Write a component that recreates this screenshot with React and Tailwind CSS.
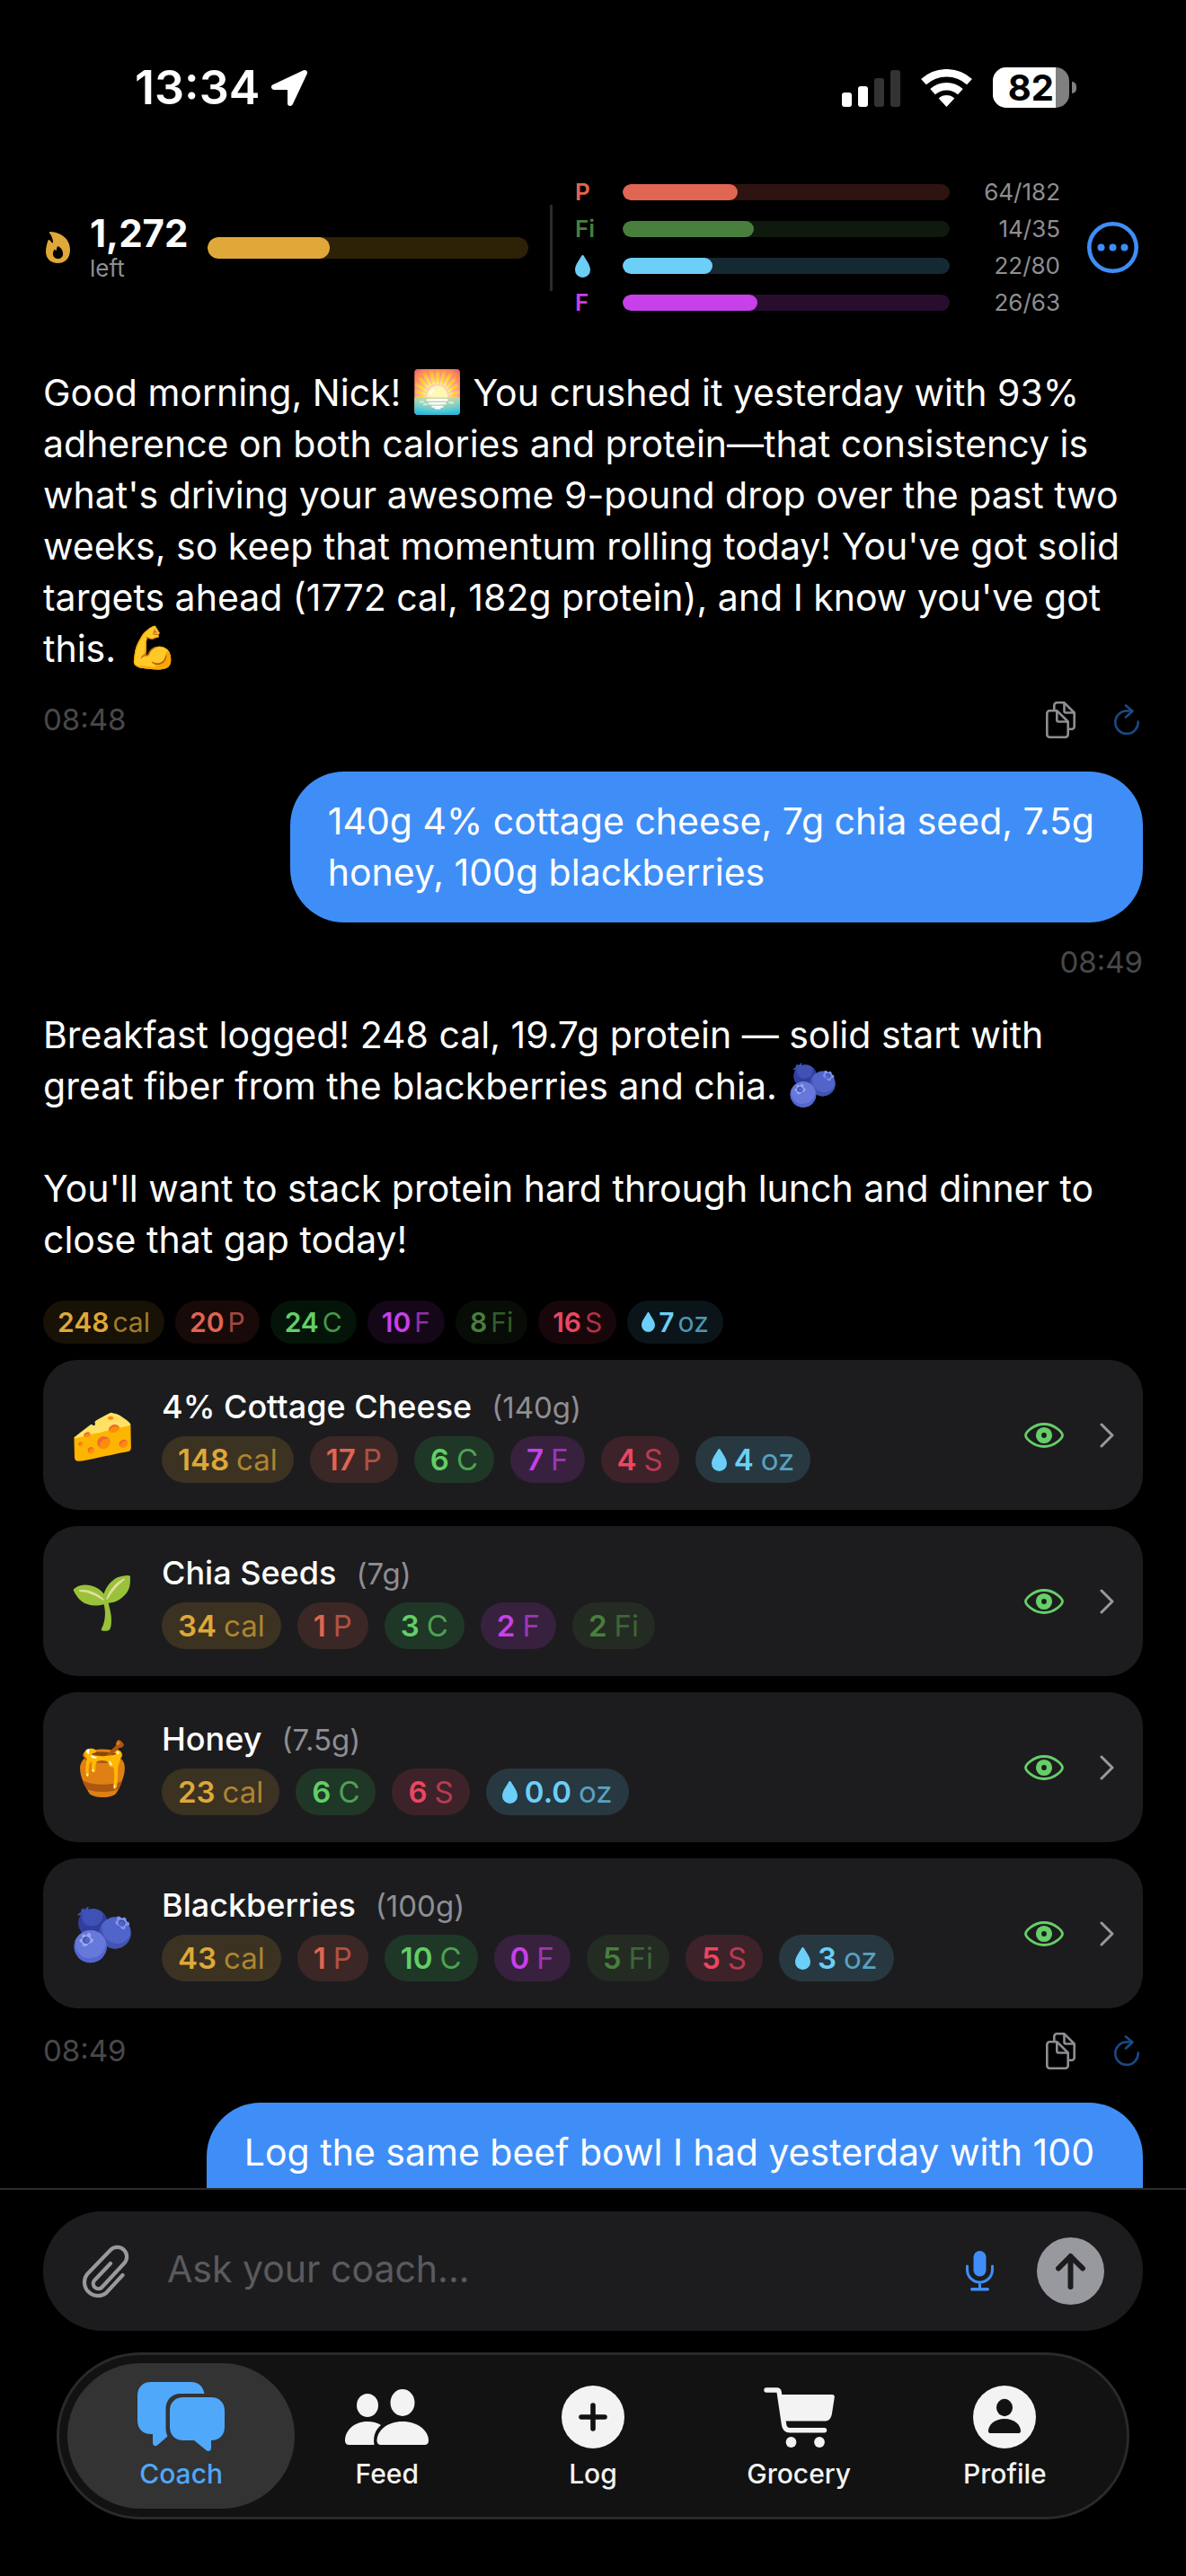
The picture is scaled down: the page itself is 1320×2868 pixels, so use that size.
import React from "react";

const MACRO = {
  cal: { unit: "cal", text: "text-[#dfa838]", soft: "bg-[#dfa838]/10", tint: "bg-[#dfa838]/16" },
  p: { unit: "P", text: "text-[#e06552]", soft: "bg-[#e06552]/10", tint: "bg-[#e06552]/16" },
  c: { unit: "C", text: "text-[#62cf66]", soft: "bg-[#34c759]/10", tint: "bg-[#34c759]/16" },
  f: { unit: "F", text: "text-[#c840e9]", soft: "bg-[#c840e9]/10", tint: "bg-[#c840e9]/16" },
  fi: { unit: "Fi", text: "text-[#487f3d]", soft: "bg-[#487f3d]/10", tint: "bg-[#487f3d]/16" },
  s: { unit: "S", text: "text-[#ec4662]", soft: "bg-[#ec4662]/10", tint: "bg-[#ec4662]/16" },
  oz: { unit: "oz", text: "text-[#6bcff8]", soft: "bg-[#6bcff8]/10", tint: "bg-[#6bcff8]/16" },
};

const TARGETS = [
  { label: "P", name: "Protein", value: 64, goal: 182, text: "text-[#e06552]", fill: "bg-[#e06552]", track: "bg-[#2d1411]" },
  { label: "Fi", name: "Fiber", value: 14, goal: 35, text: "text-[#487f3d]", fill: "bg-[#487f3d]", track: "bg-[#0f190d]" },
  { label: "drop", name: "Water", value: 22, goal: 80, text: "text-[#6bcff8]", fill: "bg-[#6bcff8]", track: "bg-[#152932]" },
  { label: "F", name: "Fat", value: 26, goal: 63, text: "text-[#c840e9]", fill: "bg-[#c840e9]", track: "bg-[#280d2f]" },
];

const TOTALS = [["cal", "248"], ["p", "20"], ["c", "24"], ["f", "10"], ["fi", "8"], ["s", "16"], ["oz", "7"]];

const FOODS = [
  { emoji: "🧀", name: "4% Cottage Cheese", amount: "(140g)", macros: [["cal", "148"], ["p", "17"], ["c", "6"], ["f", "7"], ["s", "4"], ["oz", "4"]] },
  { emoji: "🌱", name: "Chia Seeds", amount: "(7g)", macros: [["cal", "34"], ["p", "1"], ["c", "3"], ["f", "2"], ["fi", "2"]] },
  { emoji: "🍯", name: "Honey", amount: "(7.5g)", macros: [["cal", "23"], ["c", "6"], ["s", "6"], ["oz", "0.0"]] },
  { emoji: "🫐", name: "Blackberries", amount: "(100g)", macros: [["cal", "43"], ["p", "1"], ["c", "10"], ["f", "0"], ["fi", "5"], ["s", "5"], ["oz", "3"]] },
];

function Drop({ className }) {
  return (
    <svg viewBox="0 0 17 25" className={className} fill="currentColor" aria-hidden="true">
      <path d="M8.500 0C9.200 0 9.600.6 10 1.300C12.500 6 17 11 17 16.500A8.500 8.500 0 0 1 0 16.500C0 11 4.500 6 7 1.300C7.400.6 7.800 0 8.500 0Z" />
    </svg>
  );
}

function StatusBar() {
  return (
    <div className="flex items-center justify-between pt-[60px] pr-[122px] pl-[150px]">
      <div className="flex h-[75px] items-center gap-3">
        <span className="text-[52px] leading-none font-semibold">13:34</span>
        <svg width="42" height="42" viewBox="0 0 42 42" aria-hidden="true">
          <path d="M38 4L4 20H22V38Z" fill="#fff" stroke="#fff" strokeWidth="6" strokeLinejoin="round" />
        </svg>
      </div>
      <div className="flex items-center gap-[23px]">
        <svg width="65" height="42" viewBox="0 0 65 42" aria-hidden="true">
          <rect x="0" y="26" width="11" height="16" rx="3" fill="#fff" />
          <rect x="18" y="19" width="11" height="23" rx="3" fill="#fff" />
          <rect x="36" y="10" width="11" height="32" rx="3" fill="#333" />
          <rect x="54" y="1" width="11" height="41" rx="3" fill="#333" />
        </svg>
        <svg width="57" height="42" viewBox="0 0 57 42" aria-hidden="true">
          <g fill="none" stroke="#fff">
            <path d="M3 14.200A37.700 37.700 0 0 1 54 14.200" strokeWidth="8.600" />
            <path d="M13.100 25.200A22.800 22.800 0 0 1 43.900 25.200" strokeWidth="8.400" />
          </g>
          <path d="M28.500 42L19.700 32.400A13 13 0 0 1 37.300 32.400Z" fill="#fff" />
        </svg>
        <div className="flex items-center gap-[3px]">
          <div className="flex h-[45px] w-[85px] rounded-[15px] bg-[#808080]">
            <span className="w-[70px] rounded-l-[15px] bg-white pr-0.5 text-right text-[40px] leading-[45px] font-bold text-black">
              82
            </span>
          </div>
          <div className="h-[13px] w-[5px] rounded-r-full bg-[#808080]" />
        </div>
      </div>
    </div>
  );
}

function Summary() {
  return (
    <header className="flex items-center pt-[64px] pr-[53px] pl-12">
      <div className="flex flex-1 items-center">
        <svg width="33" height="35" viewBox="0 0 33 35" className="shrink-0" aria-hidden="true">
          <path
            fill="#dfa838"
            fillRule="evenodd"
            d="M8 0C20 .5 30 8 30 20C30 29.500 24.500 35 16.300 35C8.500 35 3 29.500 3 22.500C3 17.500 4.200 13.500 5.500 9.500C6 8.800 7 8.800 7.500 9.600L9.800 12.200C10.600 12.800 11.200 12 11 11C10.600 7.500 9.500 4 7 1.500C6.600.7 7.200 0 8 0ZM16.500 16C15.200 17.200 14.800 19 14.800 21C13.600 20.700 13 20.200 12.700 19.600C11.600 21.200 10.900 23 10.900 24.500C10.900 27.800 13.400 30 16.500 30C19.800 30 22.100 27.800 22.100 24.700C22.100 20.800 20 17.800 16.500 16Z"
          />
        </svg>
        <div className="ml-[19px]">
          <div className="text-[42px] leading-[42px] font-bold">1,272</div>
          <div className="mt-1 text-[26px] leading-[28px] text-[#8e8e93]">left</div>
        </div>
        <div className="ml-[22px] h-6 flex-1 overflow-hidden rounded-full bg-[#2d2106]">
          <div className="h-full w-[38%] rounded-full bg-[#dfa838]" />
        </div>
      </div>
      <div className="mr-[25px] ml-6 h-24 w-[3px] bg-[#2c2c2e]" />
      <div className="flex flex-1 flex-col gap-[11px]">
        {TARGETS.map((t) => (
          <div key={t.name} className="flex h-[30px] items-center">
            <span className={`w-[53px] text-[26px] leading-none font-semibold ${t.text}`}>
              {t.label === "drop" ? <Drop className="h-[25px] w-[17px]" /> : t.label}
            </span>
            <div className={`h-[18px] flex-1 overflow-hidden rounded-full ${t.track}`}>
              <div className={`h-full rounded-full ${t.fill}`} style={{ width: `${(t.value / t.goal) * 100}%` }} />
            </div>
            <span className="w-[123px] text-right text-[26px] leading-none text-[#8e8e93]">
              {t.value}/{t.goal}
            </span>
          </div>
        ))}
      </div>
      <button type="button" aria-label="More options" className="ml-[30px]">
        <svg width="57" height="57" viewBox="0 0 57 57" fill="#3f8ef7">
          <circle cx="28.500" cy="28.500" r="26.200" fill="none" stroke="#3f8ef7" strokeWidth="4.600" />
          <circle cx="15.500" cy="28.500" r="4" />
          <circle cx="28.500" cy="28.500" r="4" />
          <circle cx="41.500" cy="28.500" r="4" />
        </svg>
      </button>
    </header>
  );
}

function MessageMeta({ time }) {
  return (
    <div className="flex h-[42px] items-center justify-between pr-1">
      <time className="text-[33px] leading-none text-[#48484a]">{time}</time>
      <div className="flex items-center gap-[43px]">
        <button type="button" aria-label="Copy message">
          <svg width="33" height="41" viewBox="0 0 33 41" fill="none" stroke="#8e8e93" strokeWidth="2.600" strokeLinejoin="round">
            <path d="M12.500 10.300H4.300A3 3 0 0 0 1.300 13.300V36.700A3 3 0 0 0 4.300 39.700H21.700A3 3 0 0 0 24.700 36.700V22.500Z" />
            <path d="M12.300 10.300V20.500A2 2 0 0 0 14.300 22.500H24.500" />
            <path d="M9.300 10V4.300A3 3 0 0 1 12.300 1.300H20.500L31.700 12.500V27.700A3 3 0 0 1 28.700 30.700H25" />
            <path d="M20.500 1.300V10.500A2 2 0 0 0 22.500 12.500H31.500" />
          </svg>
        </button>
        <button type="button" aria-label="Regenerate reply">
          <svg width="28" height="34" viewBox="0 0 28 34" fill="none" stroke="#1a4a86" strokeWidth="2.600" strokeLinecap="round" strokeLinejoin="round">
            <path d="M26.700 19.500A12.700 12.700 0 1 1 14 7.500H20" />
            <path d="M13 1.500L20.500 7.700L13 14.500" />
          </svg>
        </button>
      </div>
    </div>
  );
}

function Emoji({ children }) {
  return <span className="text-[46px] leading-none">{children}</span>;
}

function Chip({ kind, value, small }) {
  const m = MACRO[kind];
  return (
    <span
      className={`flex items-center rounded-full leading-none ${m.text} ${
        small ? `h-12 gap-1 px-4 text-[30px] ${m.soft}` : `h-[52px] gap-2 px-[18px] text-[33px] ${m.tint}`
      }`}
    >
      {kind === "oz" && <Drop className={small ? "h-[22px] w-[15px]" : "h-[25px] w-[17px]"} />}
      <span className="font-semibold">{value}</span>
      <span className="opacity-70">{m.unit}</span>
    </span>
  );
}

function FoodCard({ food }) {
  return (
    <li className="flex h-[167px] items-center rounded-[38px] bg-[#1c1c1e] px-8">
      <span className="flex w-[68px] justify-center text-[58px] leading-none">{food.emoji}</span>
      <div className="ml-8 flex flex-1 flex-col gap-2.5">
        <div className="flex items-baseline gap-[22px]">
          <span className="text-[36px] leading-[44px] font-medium">{food.name}</span>
          <span className="text-[33px] leading-[44px] text-[#8e8e93]">{food.amount}</span>
        </div>
        <div className="flex gap-[18px]">
          {food.macros.map(([kind, value]) => (
            <Chip key={kind} kind={kind} value={value} />
          ))}
        </div>
      </div>
      <button type="button" aria-label={`Show ${food.name} in log`}>
        <svg width="44" height="28" viewBox="0 0 44 28" fill="none" stroke="#66cf68">
          <path
            strokeWidth="2.800"
            strokeLinejoin="round"
            d="M1.500 14C1.500 11 10 1.500 22 1.500S42.500 11 42.500 14S34 26.500 22 26.500S1.500 17 1.500 14Z"
          />
          <circle cx="22" cy="14" r="6" strokeWidth="6.200" />
        </svg>
      </button>
      <button type="button" aria-label={`Open ${food.name}`} className="ml-10">
        <svg width="16" height="28" viewBox="0 0 16 28" fill="none" stroke="#98989f" strokeWidth="3" strokeLinecap="round" strokeLinejoin="round">
          <path d="M2 2L14 14L2 26" />
        </svg>
      </button>
    </li>
  );
}

function Composer() {
  return (
    <form className="mx-12 mt-6 flex h-[133px] items-center rounded-[66px] bg-[#1c1c1e] pr-[43px] pl-[42px]" onSubmit={(e) => e.preventDefault()}>
      <button type="button" aria-label="Attach a file">
        <svg width="54" height="60" viewBox="0 0 54 60" fill="none" stroke="#98989f" strokeWidth="4.200" strokeLinecap="round" strokeLinejoin="round">
          <path d="M33 21L15 40A5.700 5.700 0 0 0 23 48L48 21A10.600 10.600 0 0 0 33 6L7 33A15 15 0 0 0 28 54L46.500 34" />
        </svg>
      </button>
      <input
        type="text"
        aria-label="Message"
        placeholder="Ask your coach..."
        className="ml-[42px] h-[64px] min-w-0 flex-1 bg-transparent pb-1.5 text-[41px] text-white outline-none placeholder:text-[#5a5a5e]"
      />
      <button type="button" aria-label="Dictate">
        <svg width="31" height="45" viewBox="0 0 31 45">
          <rect x="8.500" y="0" width="14" height="28.500" rx="7" fill="#3f8ef7" />
          <path d="M1.500 17V21A14 14 0 0 0 29.500 21V17M15.500 35V42" fill="none" stroke="#3f8ef7" strokeWidth="3" strokeLinecap="round" />
          <rect x="5" y="41" width="21" height="3.500" rx="1.700" fill="#3f8ef7" />
        </svg>
      </button>
      <button type="submit" aria-label="Send" className="ml-12">
        <svg width="75" height="75" viewBox="0 0 75 75">
          <circle cx="37.500" cy="37.500" r="37.500" fill="#98989f" />
          <path d="M37.500 55V21M24 34.500L37.500 21L51 34.500" fill="none" stroke="#1c1c1e" strokeWidth="6" strokeLinecap="round" strokeLinejoin="round" />
        </svg>
      </button>
    </form>
  );
}

const TABS = [
  {
    label: "Coach",
    icon: (
      <svg width="97" height="78" viewBox="0 0 97 78" fill="currentColor" aria-hidden="true">
        <path d="M15 0H60C68 0 73 5 74.500 13H48C38 13 31.500 20 31.500 30V50C31.500 54 32 58 33.500 60.500L22 70.500C20 72 17 71 17 68V58H15C6 58 0 52 0 43V15C0 6 6 0 15 0Z" />
        <path d="M51 17H82C91 17 97 23 97 32V50C97 59 91 65 82 65V73C82 77 79 78 76.500 76L63 65H51C42 65 36 59 36 50V32C36 23 42 17 51 17Z" />
      </svg>
    ),
  },
  {
    label: "Feed",
    icon: (
      <svg width="93" height="62" viewBox="0 0 93 62" fill="currentColor" aria-hidden="true">
        <ellipse cx="25" cy="18" rx="12" ry="13" />
        <ellipse cx="64" cy="15" rx="13.500" ry="15" />
        <path d="M4.500 62C1.500 62 0 60 0 57.500C0 46 10 36 25 36C31 36 36 37.500 40 40C34 45 31 52 32.500 62Z" />
        <path d="M40 62C37 62 35.500 60 35.500 57.500C35.500 46 47 36 64 36S93 46 93 57.500C93 60 91.500 62 88.500 62Z" />
      </svg>
    ),
  },
  {
    label: "Log",
    icon: (
      <svg width="70" height="70" viewBox="0 0 70 70" aria-hidden="true">
        <circle cx="35" cy="35" r="35" fill="currentColor" />
        <path d="M35 22V48M22 35H48" stroke="#121212" strokeWidth="5.600" strokeLinecap="round" />
      </svg>
    ),
  },
  {
    label: "Grocery",
    icon: (
      <svg width="79" height="67" viewBox="0 0 79 67" fill="currentColor" aria-hidden="true">
        <path d="M3 3H14.500C16 3 17 4 17.200 5.500L22.500 41C23 45.500 25.500 47.800 29 47.800H67.500" fill="none" stroke="currentColor" strokeWidth="5.400" strokeLinecap="round" strokeLinejoin="round" />
        <path d="M18.500 8H76C78 8 79 9.200 78.800 11L76 29C75 35 72.500 37.500 67.500 37.500H23Z" />
        <circle cx="30.500" cy="61" r="5.900" />
        <circle cx="62" cy="61" r="5.900" />
      </svg>
    ),
  },
  {
    label: "Profile",
    icon: (
      <svg width="70" height="70" viewBox="0 0 70 70" aria-hidden="true">
        <circle cx="35" cy="35" r="35" fill="currentColor" />
        <ellipse cx="35" cy="24.500" rx="9" ry="9.700" fill="#121212" />
        <path d="M19 53C17.500 53 17 52 17 50.500C17 44 24 37 35 37S53 44 53 50.500C53 52 52.500 53 51 53Z" fill="#121212" />
      </svg>
    ),
  },
];

function TabBar() {
  return (
    <nav className="mx-[63px] mt-6 grid h-[186px] grid-cols-5 rounded-full border-3 border-[#2a2a2a] bg-[#121212] px-[21px] py-[9px]">
      {TABS.map((tab, i) => (
        <a
          key={tab.label}
          href={`#${tab.label.toLowerCase()}`}
          aria-current={i === 0 ? "page" : undefined}
          className={`flex flex-col items-center rounded-full pt-[17px] ${
            i === 0 ? "-mx-3 bg-[#333] text-[#4fa8f9]" : "text-[#f3f3f3]"
          }`}
        >
          <span className="flex h-[86px] items-center">{tab.icon}</span>
          <span className="text-[30px] leading-[40px] font-medium">{tab.label}</span>
        </a>
      ))}
    </nav>
  );
}

export default function App() {
  return (
    <div className="flex h-screen flex-col bg-black font-['Inter','Noto_Sans',sans-serif] text-white">
      <StatusBar />
      <Summary />
      <main className="min-h-0 flex-1 overflow-hidden px-12 pt-[57px] text-[41px] leading-[57px]">
        <p>
          Good morning, Nick! <Emoji>🌅</Emoji> You crushed it yesterday with 93% adherence on both calories and
          protein—that consistency is what's driving your awesome 9-pound drop over the past two weeks, so keep that
          momentum rolling today! You've got solid targets ahead (1772 cal, 182g protein), and I know you've got this.{" "}
          <Emoji>💪</Emoji>
        </p>
        <div className="mt-[29px]">
          <MessageMeta time="08:48" />
        </div>

        <div className="mt-[37px] flex flex-col items-end">
          <p className="rounded-[60px] bg-[#3f8ef7] py-[27px] pr-[54px] pl-[42px]">
            140g 4% cottage cheese, 7g chia seed, 7.5g
            <br />
            honey, 100g blackberries
          </p>
          <time className="mt-[23px] text-[33px] leading-[42px] text-[#48484a]">08:49</time>
        </div>

        <div className="mt-8 flex flex-col gap-[57px]">
          <p>
            Breakfast logged! 248 cal, 19.7g protein — solid start with
            <br />
            great fiber from the blackberries and chia. <Emoji>🫐</Emoji>
          </p>
          <p>You'll want to stack protein hard through lunch and dinner to close that gap today!</p>
        </div>
        <div className="mt-[39px] flex gap-3">
          {TOTALS.map(([kind, value]) => (
            <Chip key={kind} kind={kind} value={value} small />
          ))}
        </div>
        <ul className="mt-[18px] flex flex-col gap-[18px]">
          {FOODS.map((food) => (
            <FoodCard key={food.name} food={food} />
          ))}
        </ul>
        <div className="mt-[26px]">
          <MessageMeta time="08:49" />
        </div>

        <div className="mt-[37px] flex justify-end">
          <p className="min-h-[168px] rounded-[60px] bg-[#3f8ef7] py-[27px] pr-[54px] pl-[42px]">
            Log the same beef bowl I had yesterday with 100
          </p>
        </div>
      </main>
      <footer className="border-t-2 border-[#2c2c2e] pb-[63px]">
        <Composer />
        <TabBar />
      </footer>
    </div>
  );
}
